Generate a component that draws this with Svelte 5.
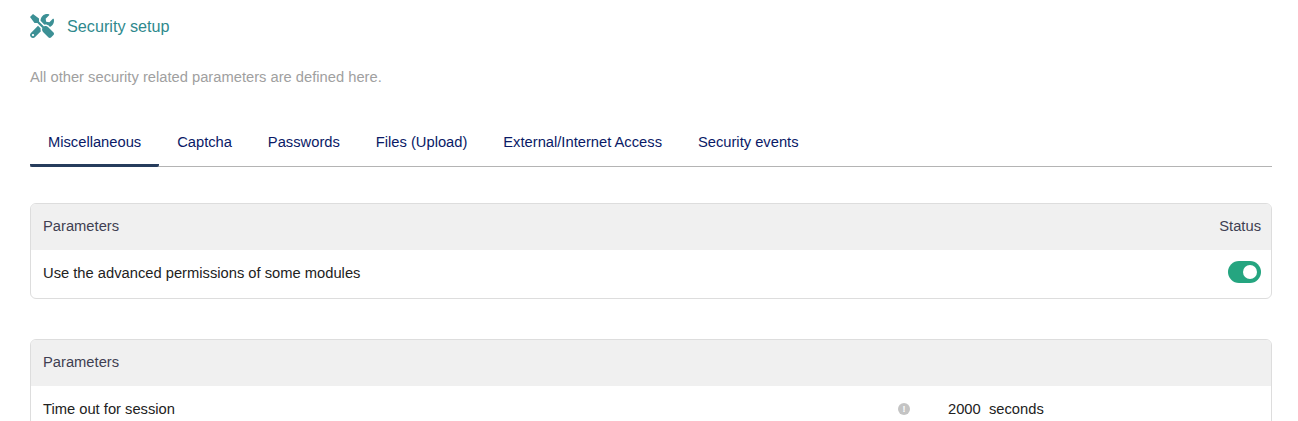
<script>
  const tabs = ['Miscellaneous', 'Captcha', 'Passwords', 'Files (Upload)', 'External/Internet Access', 'Security events'];
</script>

<div class="page">
  <div class="title">
    <svg class="tools" viewBox="0 0 512 512" aria-hidden="true">
      <path d="M501.1 395.7L384 278.6c-23.1-23.1-57.6-27.6-85.4-13.9L192 158.1V96L64 0 0 64l96 128h62.1l106.6 106.6c-13.6 27.8-9.2 62.3 13.9 85.4l117.1 117.1c14.6 14.6 38.2 14.6 52.7 0l52.7-52.7c14.5-14.6 14.5-38.2 0-52.7zM331.7 225c28.3 0 54.9 11 74.9 31l19.4 19.4c15.8-6.9 30.8-16.5 43.8-29.5 37.1-37.1 49.7-89.3 37.9-136.7-2.2-9-13.5-12.1-20.1-5.5l-74.4 74.4-67.9-11.3L334 98.9l74.4-74.4c6.6-6.6 3.4-17.9-5.7-20.2-47.4-11.7-99.6.9-136.6 37.9-28.5 28.5-41.9 66.1-41.2 103.6l82.1 82.1c8.1-1.9 16.5-2.9 24.7-2.9zm-103.9 82l-56.7-56.7L18.7 402.8c-25 25-25 65.5 0 90.5s65.5 25 90.5 0l123.6-123.6c-7.6-19.9-9.9-41.6-5-62.7zM64 472c-13.2 0-24-10.8-24-24 0-13.3 10.7-24 24-24s24 10.7 24 24c0 13.2-10.7 24-24 24z"/>
    </svg>
    <span class="title-text">Security setup</span>
  </div>
  <p class="desc">All other security related parameters are defined here.</p>

  <nav class="tabs">
    {#each tabs as tab, i}
      <span class="tab" class:active={i === 0}>{tab}</span>
    {/each}
  </nav>

  <section class="card first">
    <div class="row head"><span>Parameters</span><span>Status</span></div>
    <div class="row">
      <span>Use the advanced permissions of some modules</span>
      <span class="toggle"><span class="knob"></span></span>
    </div>
  </section>

  <section class="card second">
    <div class="row head"><span>Parameters</span></div>
    <div class="row session">
      <span class="label">Time out for session</span>
      <span class="info">!</span>
      <span class="value">2000&nbsp; seconds</span>
    </div>
  </section>
</div>

<style>
  :global(body) { margin: 0; background: #fff; overflow: hidden; }
  .page {
    height: 421px; overflow: hidden; box-sizing: border-box;
    padding: 0 26px 0 30px;
    font: 14.72px/20px "Liberation Sans", Arial, sans-serif;
    color: #222;
  }
  .title { display: flex; align-items: center; gap: 13px; padding-top: 14px; height: 24px; color: #2f898d; font-size: 16.2px; }
  .tools { width: 24px; height: 24px; fill: #3c9095; flex: none; }
  .desc { margin: 29px 0 0; color: #a0a0a0; line-height: 20px; }
  .tabs { display: flex; margin-top: 35px; height: 45px; box-sizing: border-box; border-bottom: 1px solid #b4b4b4; }
  .tab { padding: 10px 17.96px 0; height: 45px; box-sizing: border-box; color: #0a1a66; }
  .active { border-bottom: 3px solid #263c5c; border-radius: 2px; }
  .card { border: 1px solid #ddd; border-radius: 6px; overflow: hidden; }
  .first { margin-top: 36px; }
  .second { margin-top: 40px; }
  .row { display: flex; justify-content: space-between; align-items: center; height: 48px; padding: 0 10px 2px 12px; box-sizing: border-box; }
  .head { height: 46px; background: #f0f0f0; color: #3f3f52; }
  .toggle { width: 33px; height: 22px; margin-top: -2px; border-radius: 11px; background: #25a580; display: flex; align-items: center; justify-content: flex-end; padding-right: 4px; box-sizing: border-box; }
  .knob { width: 14px; height: 14px; border-radius: 50%; background: #fff; }
  .session { justify-content: flex-start; }
  .label { width: 855px; }
  .info { width: 12px; height: 12px; border-radius: 50%; background: #c4c4c4; color: #fff; font: bold 9px/12px "Liberation Sans", sans-serif; text-align: center; }
  .value { margin-left: 38px; color: #222; }
</style>
